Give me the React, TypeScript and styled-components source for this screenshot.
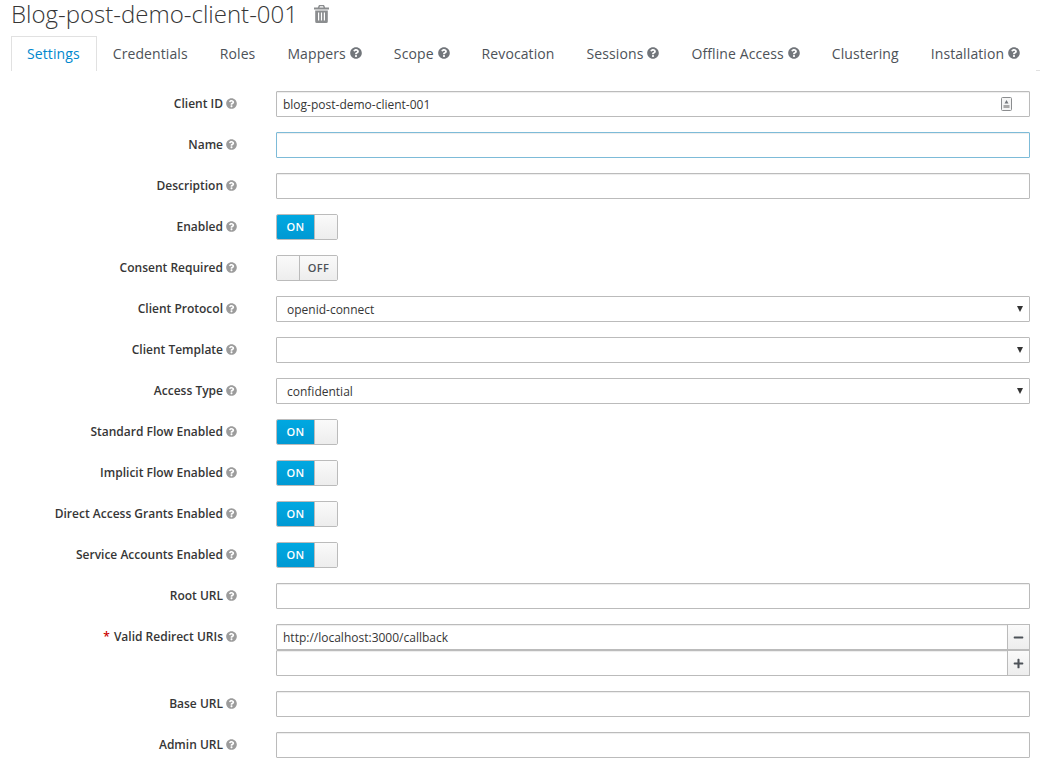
import styled, { createGlobalStyle } from 'styled-components'
import { FaMinus, FaPlus, FaQuestionCircle } from 'react-icons/fa'

const GlobalStyle = createGlobalStyle`
  html, body {
    margin: 0;
    padding: 0;
    background: #fff;
    overflow: hidden;
  }
  body {
    font-family: "Open Sans", "Liberation Sans", sans-serif;
    font-size: 12px;
    color: #363636;
  }
`
const Page = styled.div`
  width: 1040px;
  height: 773px;
  overflow: hidden;
  box-sizing: border-box;
  padding-left: 11px;
`
const TitleRow = styled.div`
  display: flex;
  align-items: center;
  height: 36px;
  padding-bottom: 8px;
  box-sizing: border-box;
`
const Title = styled.h1`
  margin: 0;
  font-size: 24px;
  font-weight: 300;
  line-height: 28px;
  color: #363636;
`
const TrashIcon = styled.svg`
  display: block;
  margin-left: 16px;
  color: #8b8d8f;
`
const Tabs = styled.ul`
  display: flex;
  margin: 0;
  padding: 0;
  height: 35px;
  box-sizing: border-box;
  list-style: none;
  border-bottom: 1px solid #e1e1e1;
`
const Tab = styled.li<{ $active?: boolean }>`
  display: flex;
  align-items: center;
  gap: 4px;
  height: 35px;
  box-sizing: border-box;
  padding: 0 ${p => (p.$active ? '16px' : '15px')} 2px 15px;
  font-size: 14px;
  letter-spacing: 0.1px;
  color: ${p => (p.$active ? '#0088ce' : '#4d5258')};
  background: #fff;
  border: 1px solid ${p => (p.$active ? '#e1e1e1' : 'transparent')};
  border-bottom: none;
  svg {
    color: #72767b;
    font-size: 12px;
  }
`
const Form = styled.div`
  display: flex;
  flex-direction: column;
  gap: 15px;
  padding-top: 20px;
`
const Row = styled.div`
  display: flex;
  align-items: flex-start;
`
const Label = styled.label`
  display: flex;
  align-items: center;
  justify-content: flex-end;
  gap: 3px;
  width: 226px;
  height: 26px;
  box-sizing: border-box;
  padding-bottom: 2px;
  flex: none;
  font-weight: 600;
  font-size: 12px;
  color: #363636;
  svg {
    color: #9c9c9c;
    font-size: 11px;
  }
`
const Required = styled.span`
  color: #c00;
  margin-right: 1px;
`
const Field = styled.div`
  flex: none;
  width: 754px;
  margin-left: 39px;
  position: relative;
`
const Input = styled.input<{ $focused?: boolean }>`
  display: block;
  width: 100%;
  height: 26px;
  box-sizing: border-box;
  padding: 2px 6px;
  font-family: inherit;
  font-size: 12px;
  color: #363636;
  background: #fff;
  border: 1px solid ${p => (p.$focused ? '#7dbbd8' : '#bbb')};
  border-radius: 1px;
  outline: none;
  box-shadow: inset 0 1px 1px rgba(3, 3, 3, 0.075);
`
const CopyIcon = styled.svg`
  position: absolute;
  top: 6px;
  right: 18px;
`
const Select = styled.div`
  display: flex;
  align-items: center;
  justify-content: space-between;
  height: 26px;
  box-sizing: border-box;
  padding: 0 6px 0 10px;
  border: 1px solid #bbb;
  border-radius: 1px;
  font-size: 12px;
  color: #363636;
`
const Caret = styled.span`
  width: 0;
  height: 0;
  border-left: 3.5px solid transparent;
  border-right: 3.5px solid transparent;
  border-top: 6px solid #333;
`
const Switch = styled.div`
  display: flex;
  width: 62px;
  height: 26px;
  box-sizing: border-box;
  border: 1px solid #bbb;
  border-radius: 2px;
  overflow: hidden;
`
const SwitchLabel = styled.span<{ $on?: boolean }>`
  display: flex;
  align-items: center;
  justify-content: center;
  flex: 1;
  padding-bottom: 1px;
  font-size: 11px;
  font-weight: 600;
  letter-spacing: 0.3px;
  color: ${p => (p.$on ? '#fff' : '#4d5258')};
  background: ${p => (p.$on ? 'linear-gradient(#00a8e1, #0099d3)' : 'linear-gradient(#fafafa, #ededed)')};
`
const SwitchHandle = styled.span<{ $side: 'left' | 'right' }>`
  width: 22px;
  flex: none;
  background: linear-gradient(#fafafa, #ededed);
  border-${p => p.$side}: 1px solid #bbb;
`
const InputGroup = styled.div`
  display: flex;
`
const GroupInput = styled(Input)`
  flex: 1;
  width: auto;
  min-width: 0;
`
const GroupButton = styled.span`
  display: flex;
  align-items: center;
  justify-content: center;
  width: 23px;
  height: 26px;
  flex: none;
  box-sizing: border-box;
  margin-left: -1px;
  border: 1px solid #bbb;
  background: linear-gradient(#fafafa, #ededed);
  color: #4d5258;
  font-size: 11px;
`

const tabs = [
  { name: 'Settings', active: true },
  { name: 'Credentials' },
  { name: 'Roles' },
  { name: 'Mappers', help: true },
  { name: 'Scope', help: true },
  { name: 'Revocation' },
  { name: 'Sessions', help: true },
  { name: 'Offline Access', help: true },
  { name: 'Clustering' },
  { name: 'Installation', help: true },
]

const FormLabel = ({ text, required }: { text: string; required?: boolean }): JSX.Element => (
  <Label>
    {required && <Required>*</Required>}
    {text}
    <FaQuestionCircle />
  </Label>
)

const Toggle = ({ on }: { on: boolean }): JSX.Element => (
  <Switch>
    {!on && <SwitchHandle $side="right" />}
    <SwitchLabel $on={on}>{on ? 'ON' : 'OFF'}</SwitchLabel>
    {on && <SwitchHandle $side="left" />}
  </Switch>
)

const TextRow = ({ label, value, focused }: { label: string; value?: string; focused?: boolean }): JSX.Element => (
  <Row>
    <FormLabel text={label} />
    <Field>
      <Input readOnly value={value ?? ''} $focused={focused} />
    </Field>
  </Row>
)

const ToggleRow = ({ label, on }: { label: string; on: boolean }): JSX.Element => (
  <Row>
    <FormLabel text={label} />
    <Field>
      <Toggle on={on} />
    </Field>
  </Row>
)

const SelectRow = ({ label, value }: { label: string; value?: string }): JSX.Element => (
  <Row>
    <FormLabel text={label} />
    <Field>
      <Select>
        <span>{value}</span>
        <Caret />
      </Select>
    </Field>
  </Row>
)

const App = (): JSX.Element => (
  <Page>
    <GlobalStyle />
    <TitleRow>
      <Title>Blog-post-demo-client-001</Title>
      <TrashIcon width="15" height="18" viewBox="0 0 15 18">
        <path
          fill="currentColor"
          fillRule="evenodd"
          d="M5 0h5l1.2 2.4H15v2H0v-2h3.8zM6 1.2l-.6 1.2h4.2L9 1.2zM1.2 5.4h12.6V16.5A1.5 1.5 0 0 1 12.3 18H2.7a1.5 1.5 0 0 1-1.5-1.5zM4 7.5v8h1.2v-8zM6.9 7.5v8h1.2v-8zM9.8 7.5v8H11v-8z"
        />
      </TrashIcon>
    </TitleRow>
    <Tabs>
      {tabs.map(tab => (
        <Tab key={tab.name} $active={tab.active}>
          {tab.name}
          {tab.help && <FaQuestionCircle />}
        </Tab>
      ))}
    </Tabs>
    <Form>
      <Row>
        <FormLabel text="Client ID" />
        <Field>
          <Input readOnly value="blog-post-demo-client-001" />
          <CopyIcon width="11" height="14" viewBox="0 0 11 14">
            <rect x="0.5" y="0.5" width="10" height="13" rx="1" fill="#f5f5f5" stroke="#8b8d8f" />
            <path d="M5.5 3l2 3.5h-4z" fill="#72767b" />
            <rect x="2.5" y="8" width="6" height="3" fill="#a8a8a8" />
          </CopyIcon>
        </Field>
      </Row>
      <TextRow label="Name" focused />
      <TextRow label="Description" />
      <ToggleRow label="Enabled" on />
      <ToggleRow label="Consent Required" on={false} />
      <SelectRow label="Client Protocol" value="openid-connect" />
      <SelectRow label="Client Template" />
      <SelectRow label="Access Type" value="confidential" />
      <ToggleRow label="Standard Flow Enabled" on />
      <ToggleRow label="Implicit Flow Enabled" on />
      <ToggleRow label="Direct Access Grants Enabled" on />
      <ToggleRow label="Service Accounts Enabled" on />
      <TextRow label="Root URL" />
      <Row>
        <FormLabel text="Valid Redirect URIs" required />
        <Field>
          <InputGroup>
            <GroupInput readOnly value="http://localhost:3000/callback" />
            <GroupButton>
              <FaMinus />
            </GroupButton>
          </InputGroup>
          <InputGroup>
            <GroupInput readOnly value="" />
            <GroupButton>
              <FaPlus />
            </GroupButton>
          </InputGroup>
        </Field>
      </Row>
      <TextRow label="Base URL" />
      <TextRow label="Admin URL" />
    </Form>
  </Page>
)

export default App
